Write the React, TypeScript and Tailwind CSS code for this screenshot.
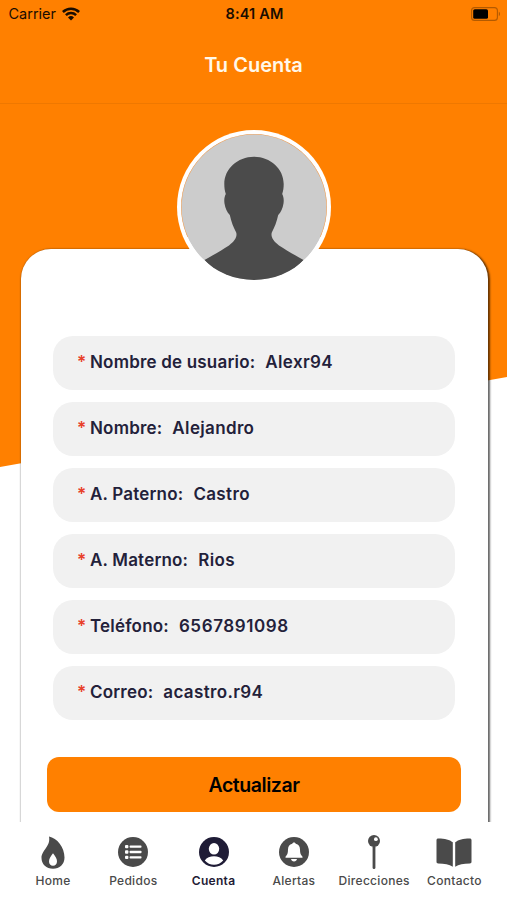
import type { ReactNode } from "react";
import clsx from "clsx";

interface FieldProps {
    label: string;
    value: string;
    isNumeric?: boolean;
}

interface TabItemProps {
    label: string;
    isActive?: boolean;
    children: ReactNode;
}

const fields: FieldProps[] = [
    { label: "Nombre de usuario:", value: "Alexr94" },
    { label: "Nombre:", value: "Alejandro" },
    { label: "A. Paterno:", value: "Castro" },
    { label: "A. Materno:", value: "Rios" },
    { label: "Teléfono:", value: "6567891098", isNumeric: true },
    { label: "Correo:", value: "acastro.r94" },
];

const WifiIcon = () => (
    <svg width="18" height="14" viewBox="0 0 18 14" fill="none" stroke="#1a0d00" strokeWidth="2.5">
        <path d="M0.9 5a11.5 11.5 0 0 1 16.2 0" />
        <path d="M3.9 8.2a7.3 7.3 0 0 1 10.2 0" />
        <path d="M6 10.4a4.3 4.3 0 0 1 6 0L9 13.5z" fill="#1a0d00" stroke="none" />
    </svg>
);

const BatteryIcon = () => (
    <svg width="30" height="14" viewBox="0 0 30 14">
        <rect x="0.6" y="0.6" width="25.8" height="12.8" rx="3" fill="none" stroke="#b35a00" strokeWidth="1.1" />
        <rect x="2.2" y="2.2" width="14.8" height="9.6" rx="1.6" fill="#000" />
        <path d="M27.8 4.8c1.6.6 1.6 3.8 0 4.4z" fill="#b35a00" />
    </svg>
);

const Avatar = () => (
    <div className="w-[154px] h-[154px] rounded-full bg-white p-1">
        <svg className="w-full h-full rounded-full" viewBox="0 0 146 146">
            <circle cx="73" cy="73" r="73" fill="#cccccc" />
            <path
                fill="#4b4b4b"
                d="M73 22.7C56.5 22.7 43.3 34.8 43.3 50c0 4 .4 6.500 1.500 10-1.500 3-1.800 6-1.300 9.500.8 5 2.500 8.500 5.300 11.500 1.500 6.500 3.400 12 6.400 17.500 1.300 4.500-1.700 9-7.200 13C42 115.500 33 120.500 23.500 126 36 140 53 149 73 149s37-9 49.500-23c-9.500-5.500-18.500-10.500-24.500-14.500-5.500-4-8.500-8.500-7.200-13 3-5.500 4.900-11 6.400-17.500 2.800-3 4.500-6.500 5.300-11.500.5-3.500.2-6.500-1.300-9.500 1.100-3.500 1.500-6 1.500-10C102.700 34.800 89.500 22.700 73 22.700z"
            />
            <path d="M6.500 103A73 73 0 1 1 139.500 103" fill="none" stroke="#f0a560" strokeWidth="1.2" />
        </svg>
    </div>
);

const FlameIcon = () => (
    <svg width="24" height="33" viewBox="0 0 24 33">
        <path d="M8 .5C16 2 23.500 11 23.500 21.500c0 6.800-5 11.300-11.500 11.300S.5 28.300.5 22C.5 14 10 10.500 8 .5z" fill="#4a4a4a" />
        <path d="M12 17.300c2 2.700 4 5.200 4 7.900 0 2.800-1.600 4.600-4 4.600s-4-1.800-4-4.600c0-2.700 2-5.200 4-7.900z" fill="#fff" />
    </svg>
);

const ListIcon = () => (
    <svg width="30" height="30" viewBox="0 0 30 30">
        <circle cx="15" cy="15" r="15" fill="#4a4a4a" />
        <g fill="#fff">
            <rect x="7" y="7.9" width="3.4" height="3.4" rx="1" />
            <rect x="7" y="13.3" width="3.4" height="3.4" rx="1" />
            <rect x="7" y="18.7" width="3.4" height="3.4" rx="1" />
            <rect x="11.6" y="8.4" width="11.9" height="2.4" rx="0.8" />
            <rect x="11.6" y="13.8" width="11.9" height="2.4" rx="0.8" />
            <rect x="11.6" y="19.2" width="11.9" height="2.4" rx="0.8" />
        </g>
    </svg>
);

const PersonIcon = () => (
    <svg width="30" height="30" viewBox="0 0 30 30">
        <circle cx="15" cy="15" r="15" fill="#1f1c36" />
        <ellipse cx="15" cy="11.8" rx="5.2" ry="5.8" fill="#fff" />
        <path d="M5.800 23.600c1.900-3 5.400-4.300 9.200-4.300s7.300 1.300 9.200 4.300c-2.400 2.800-5.600 4.200-9.200 4.200s-6.800-1.400-9.200-4.200z" fill="#fff" />
    </svg>
);

const BellIcon = () => (
    <svg width="30" height="30" viewBox="0 0 30 30">
        <circle cx="15" cy="15" r="15" fill="#4a4a4a" />
        <path d="M15 5.400c1 0 1.600.6 1.700 1.300 3 .7 4.300 3 4.300 5.800 0 4 .8 5.300 2.500 7.200v1.100h-17v-1.100c1.700-1.900 2.500-3.200 2.500-7.200 0-2.800 1.300-5.100 4.300-5.800.1-.7.700-1.300 1.700-1.300z" fill="#fff" />
        <path d="M12 21.900h6c-.3 1.600-1.400 2.500-3 2.500s-2.700-.9-3-2.500z" fill="#fff" />
    </svg>
);

const PinIcon = () => (
    <svg width="12" height="34" viewBox="0 0 12 34">
        <circle cx="6" cy="6" r="6" fill="#4a4a4a" />
        <rect x="4.6" y="11" width="2.8" height="23" rx="1.3" fill="#4a4a4a" />
        <circle cx="7.9" cy="4.2" r="1.9" fill="#fff" />
    </svg>
);

const BookIcon = () => (
    <svg width="36" height="29" viewBox="0 0 36 29" fill="#4a4a4a">
        <path d="M16.800 4.300C13.500 1.500 9 .4 2.300.4 1.200.4.5 1 .5 2.100v21.700c0 1.100.6 1.600 1.700 1.700 6.300.2 11 .7 14.600 3.300z" />
        <path d="M19.200 4.300C22.500 1.500 27 .4 33.700.4c1.100 0 1.800.6 1.800 1.700v21.700c0 1.100-.6 1.600-1.700 1.700-6.300.2-11 .7-14.600 3.300z" />
    </svg>
);

const Field = ({ label, value, isNumeric }: FieldProps) => {
    return (
        <div className="w-full h-[54px] flex items-center rounded-[20px] bg-[#f1f1f1] pl-6 text-[17px] font-semibold text-[#23213a]">
            <span className="w-[13px] text-[#e8402a]">*</span>
            <span className="tracking-[0.19px]">{label}</span>
            <span className={clsx("pl-[10px]", isNumeric ? "tracking-[0.6px]" : "tracking-[0.35px]")}>{value}</span>
        </div>
    );
};

const TabItem = ({ label, isActive, children }: TabItemProps) => {
    return (
        <div className="w-[80.3px] flex flex-col items-center">
            <div className="h-[38px] flex items-center justify-center">{children}</div>
            <p
                className={clsx(
                    "mt-[2px] text-[12px] leading-4 tracking-[0.3px] whitespace-nowrap",
                    isActive ? "text-[#1f1c36] font-semibold" : "text-[#4a4a4a] font-medium",
                )}
            >
                {label}
            </p>
        </div>
    );
};

export default function App() {
    return (
        <div className="w-[507px] h-[900px] flex flex-col overflow-hidden bg-white font-[Inter,sans-serif]">
            <header className="h-[104px] shrink-0 bg-[#ff8000] border-b border-[#ef7800]">
                <div className="h-7 grid grid-cols-3 items-center pl-[8.5px] pr-[6.5px] text-[14.5px] text-[#1a0d00]">
                    <div className="flex items-center gap-[6px]">
                        <span>Carrier</span>
                        <WifiIcon />
                    </div>
                    <span className="text-center font-semibold tracking-[0.15px]">8:41 AM</span>
                    <div className="flex justify-end">
                        <BatteryIcon />
                    </div>
                </div>
                <h1 className="pt-[21px] text-center text-[20px] leading-8 font-semibold text-[#fff8ea]">Tu Cuenta</h1>
            </header>

            <main className="relative h-[718px] shrink-0 overflow-hidden">
                <div className="absolute inset-x-0 top-0 h-[363px] bg-[#ff8000] [clip-path:polygon(0_0,100%_0,100%_273px,0_100%)]" />
                <div className="relative pt-[145px] pl-[20.5px] pr-[19.5px]">
                    <div className="h-[620px] flex flex-col items-center rounded-t-[30px] bg-white px-[32.5px] shadow-[1px_1px_2px_1px_rgba(0,0,0,0.6)]">
                        <div className="-mt-[119px]">
                            <Avatar />
                        </div>
                        <div className="w-full flex flex-col gap-3 pt-[52px]">
                            {fields.map((field) => (
                                <Field key={field.label} {...field} />
                            ))}
                        </div>
                        <button className="mt-[37px] h-[55px] w-[414px] shrink-0 rounded-xl bg-[#ff8000] pt-[3px] text-[19.5px] font-semibold tracking-[-0.45px] text-black">
                            Actualizar
                        </button>
                    </div>
                </div>
            </main>

            <nav className="flex flex-1 justify-center bg-white pt-[11px] pl-[0.5px]">
                <TabItem label="Home"><FlameIcon /></TabItem>
                <TabItem label="Pedidos"><ListIcon /></TabItem>
                <TabItem label="Cuenta" isActive><PersonIcon /></TabItem>
                <TabItem label="Alertas"><BellIcon /></TabItem>
                <TabItem label="Direcciones"><PinIcon /></TabItem>
                <TabItem label="Contacto"><BookIcon /></TabItem>
            </nav>
        </div>
    );
}
